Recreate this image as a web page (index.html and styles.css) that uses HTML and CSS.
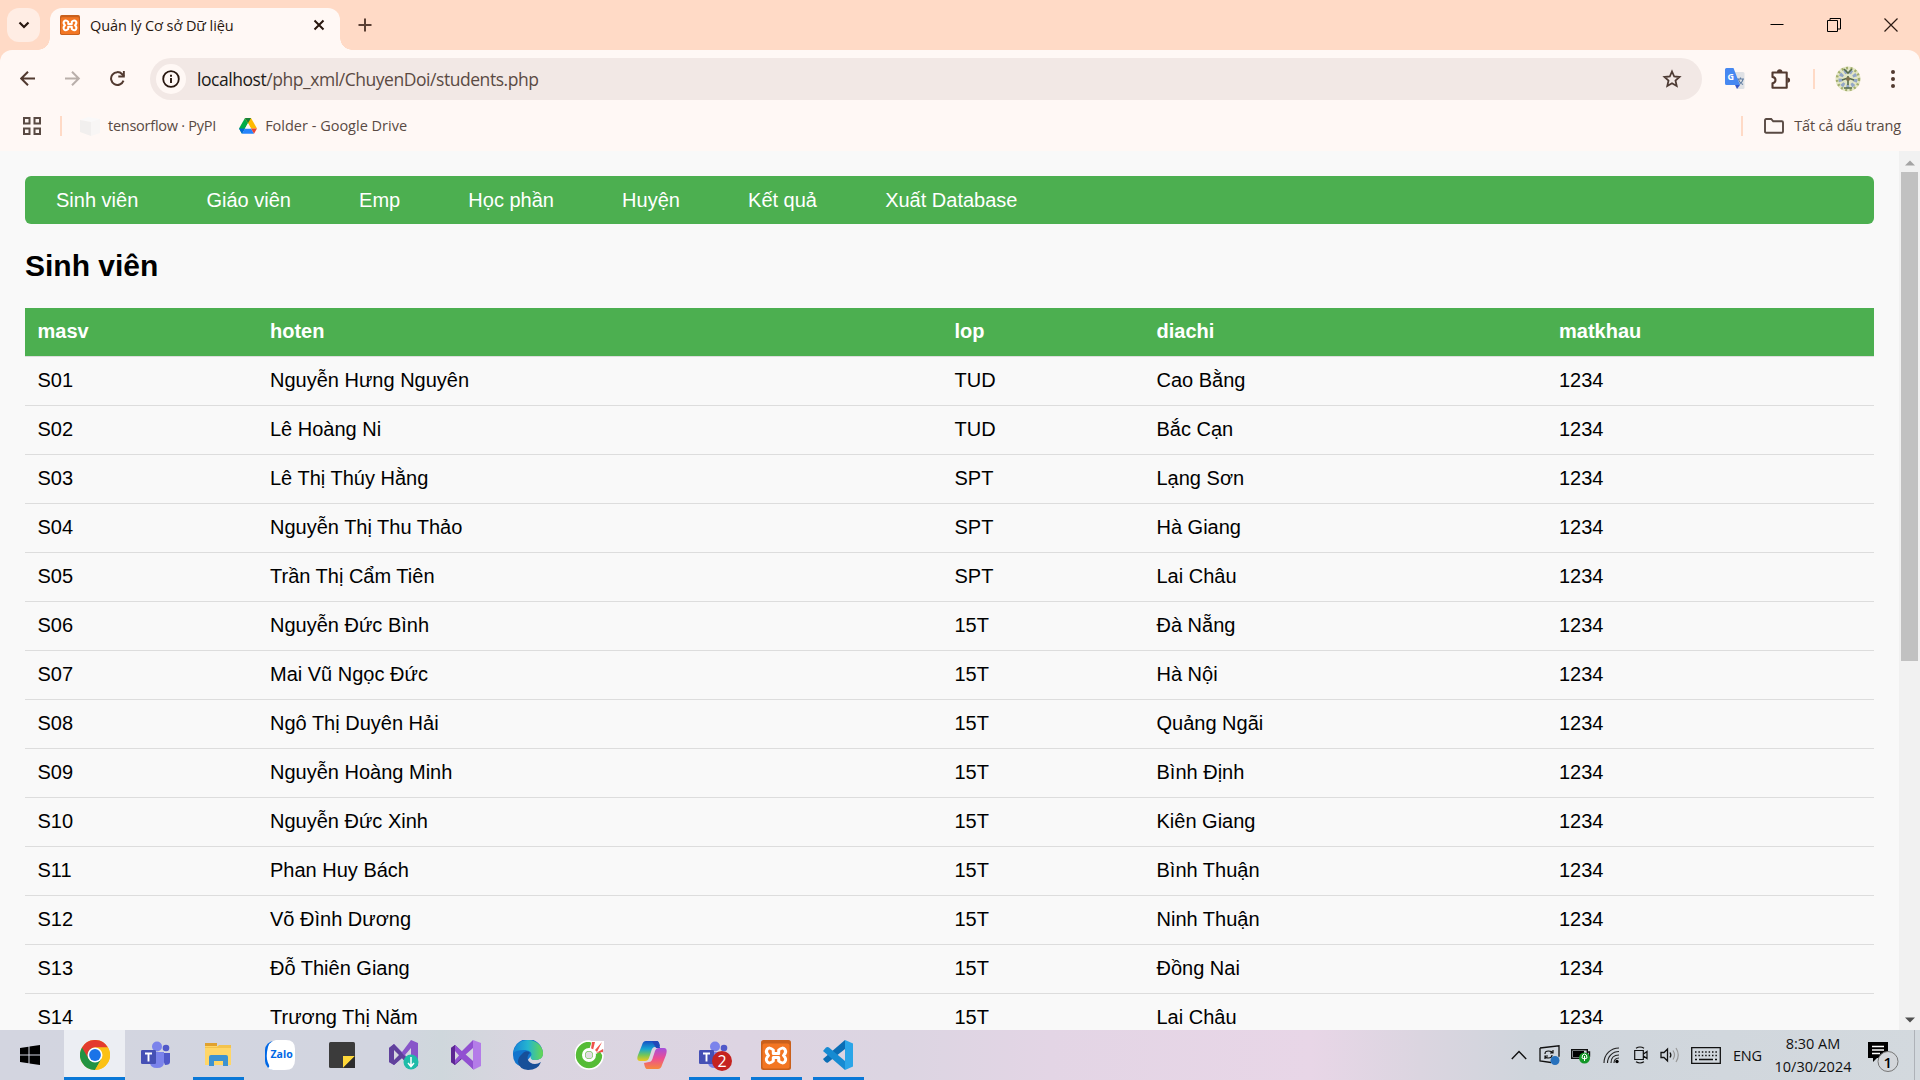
FILE: index.html
```html
<!DOCTYPE html>
<html lang="vi">
<head>
<meta charset="utf-8">
<title>Quản lý Cơ sở Dữ liệu</title>
<link rel="stylesheet" href="styles.css">
</head>
<body>
<div class="screen">
  <header class="tabstrip">
    <button class="tab-search" aria-label="Tab search"><svg width="12" height="8" viewBox="0 0 12 8"><path d="M1.5 1.5 6 6l4.500-4.500" fill="none" stroke="#28170f" stroke-width="2.200"/></svg></button>
    <div class="tab">
      <svg class="xampp" width="20" height="20" viewBox="0 0 30 30"><use href="#xampp"/></svg>
      <span class="tab-title">Quản lý Cơ sở Dữ liệu</span>
      <svg class="tab-close" width="12" height="12" viewBox="0 0 12 12"><path d="M1.500 1.500l9 9m0-9l-9 9" stroke="#28170f" stroke-width="2"/></svg>
    </div>
    <svg class="new-tab" width="14" height="14" viewBox="0 0 14 14"><path d="M7 .500v13M.500 7h13" stroke="#5a3f33" stroke-width="2"/></svg>
    <div class="window-buttons">
      <svg width="14" height="14" viewBox="0 0 14 14"><path d="M.500 6.500h13" stroke="#000" stroke-width="1"/></svg>
      <svg width="14" height="14" viewBox="0 0 14 14"><path d="M.500 2.500h10v11h-10zM3 2.500v-2h10.500v10.500h-3" fill="none" stroke="#000"/></svg>
      <svg width="14" height="14" viewBox="0 0 14 14"><path d="M.500.500l13 13m0-13l-13 13" stroke="#2b1a13" stroke-width="1.200"/></svg>
    </div>
  </header>

  <div class="toolbar">
    <svg class="nav-icon" width="16" height="16" viewBox="0 0 16 16"><path d="M15 7.500H1.500M8 .700 1.200 7.500l6.800 6.800" fill="none" stroke="#523a30" stroke-width="2"/></svg>
    <svg class="nav-icon" width="16" height="16" viewBox="0 0 16 16"><path d="M0 7.500H13.500M7 .700 13.800 7.500 7 14.300" fill="none" stroke="#b9afaa" stroke-width="2"/></svg>
    <svg class="nav-icon" width="16" height="16" viewBox="0 0 16 16"><path d="M13.500 9.700A6.400 6.400 0 1 1 12.200 3.200L14 5.200" fill="none" stroke="#523a30" stroke-width="2"/><path d="M14.800 0v6.500H8.300v-1.900h4.600V0z" fill="#523a30"/></svg>
    <div class="omnibox">
      <span class="site-info"><svg width="18" height="18" viewBox="0 0 18 18"><circle cx="9" cy="9" r="7.800" fill="none" stroke="#28170f" stroke-width="1.800"/><path d="M9 8v5M9 4.800v1.900" stroke="#28170f" stroke-width="1.900"/></svg></span>
      <span class="url"><b>localhost</b>/php_xml/ChuyenDoi/students.php</span>
      <svg class="star" width="20" height="20" viewBox="0 0 20 20"><path d="M10 2.500l2.200 5 5.300.500-4 3.600 1.200 5.400L10 14.200 5.300 17l1.200-5.400-4-3.600 5.300-.500z" fill="none" stroke="#4e3b34" stroke-width="1.800"/></svg>
    </div>
    <div class="extensions">
      <svg width="20" height="22" viewBox="0 0 20 22"><path d="M8 4h10a1.500 1.500 0 0 1 1.500 1.500v14A1.500 1.500 0 0 1 18 21h-6z" fill="#dfe1e5"/><path d="M12 11h7m-3.500-1.500V11m-2 0c.500 3 2.500 4.500 4.500 5.500m0-5.500c-.500 3-3 5-5 6" stroke="#607da1" stroke-width="1.200" fill="none"/><path d="M10 17h5l-3 4z" fill="#3657c8"/><path d="M1.500 0h7L15 17H1.500A1.500 1.500 0 0 1 0 15.500v-14A1.500 1.500 0 0 1 1.500 0z" fill="#4688f1"/><text x="2.500" y="11.800" class="g-letter">G</text></svg>
      <svg class="puzzle" width="22" height="21" viewBox="0 0 22 21"><path d="M2.500 3.500h14.200v15.300H2.500v-4.500q3-.600 3-3.200t-3-3.200z" fill="none" stroke="#523a30" stroke-width="2.100" stroke-linejoin="round"/><path d="M7 3a2.700 2.700 0 0 1 5.400 0M17.500 8.500a2.500 2.500 0 0 1 0 5.200z" fill="#523a30"/></svg>
      <i class="divider"></i>
      <svg class="avatar" width="26" height="26" viewBox="0 0 26 26"><circle cx="13" cy="13" r="12.500" fill="#e3e6c4"/><circle cx="13" cy="13" r="11" fill="none" stroke="#a3ae6c" stroke-width="2.500" stroke-dasharray="2 2.500"/><circle cx="13" cy="13" r="7.500" fill="none" stroke="#93a7c6" stroke-width="4" stroke-dasharray="3 2.200"/><path d="M9 3l4 4 4-4M13 10v9M9 22h8M7 14l6-2 6 2" fill="none" stroke="#566b4a" stroke-width="1.600"/><circle cx="13" cy="13" r="2" fill="#80704b"/></svg>
      <svg width="4" height="18" viewBox="0 0 4 18" fill="#523a30"><circle cx="2" cy="2" r="2"/><circle cx="2" cy="9" r="2"/><circle cx="2" cy="16" r="2"/></svg>
    </div>
  </div>

  <div class="bookmarks">
    <svg width="18" height="18" viewBox="0 0 18 18"><path d="M1 1h5.500v5.500H1zM11.500 1H17v5.500h-5.500zM1 11.500h5.500V17H1zM11.500 11.500H17V17h-5.500z" fill="none" stroke="#594a43" stroke-width="2"/></svg>
    <i class="divider"></i>
    <svg class="pypi" width="20" height="20" viewBox="0 0 20 20"><path d="M0 4 8 1l12 2-8 3z" fill="#faf9f9"/><path d="M0 4l11 2v14L0 16z" fill="#f1efee"/><path d="M11 6l9-3v14l-9 3z" fill="#f8f6f5"/></svg>
    <span class="mark-pypi">tensorflow · PyPI</span>
    <svg class="drive" width="18" height="18" viewBox="0 0 18 18"><path d="M6 1h6L9 6.500z" fill="#188038"/><path d="M6 1 0 11.500 3 16.800 9 6.300z" fill="#00ac47"/><path d="M12 1l6 10.500h-6L6 1z" fill="#ffba00"/><path d="M6 1h6L9 6.300z" fill="#188038"/><path d="M0 11.500h6L3 16.800z" fill="#0066da"/><path d="M6 11.500h6L15 16.800H3z" fill="#2684fc"/><path d="M12 11.500h6L15 16.800z" fill="#ea4335"/><path d="M9 6.300 6 11.500h6z" fill="#fff8f5"/></svg>
    <span class="mark-drive">Folder - Google Drive</span>
    <div class="all-marks">
      <i class="divider"></i>
      <svg width="20" height="16" viewBox="0 0 20 16"><path d="M1 13.500V2.200Q1 1 2.200 1h5l2 2.300h8.600Q19 3.300 19 4.500v9q0 1.300-1.200 1.300H2.200Q1 14.800 1 13.500z" fill="none" stroke="#594a43" stroke-width="1.900"/></svg>
      <span class="mark-all">Tất cả dấu trang</span>
    </div>
  </div>

  <div class="viewport">
    <main class="page">
      <nav class="menu">
        <a>Sinh viên</a><a>Giáo viên</a><a>Emp</a><a>Học phần</a><a>Huyện</a><a>Kết quả</a><a>Xuất Database</a>
      </nav>
      <h2>Sinh viên</h2>
      <table>
        <colgroup><col class="c-id"><col class="c-name"><col class="c-class"><col class="c-place"><col class="c-pass"></colgroup>
        <thead><tr><th>masv</th><th>hoten</th><th>lop</th><th>diachi</th><th>matkhau</th></tr></thead>
        <tbody>
          <tr><td>S01</td><td>Nguyễn Hưng Nguyên</td><td>TUD</td><td>Cao Bằng</td><td>1234</td></tr>
          <tr><td>S02</td><td>Lê Hoàng Ni</td><td>TUD</td><td>Bắc Cạn</td><td>1234</td></tr>
          <tr><td>S03</td><td>Lê Thị Thúy Hằng</td><td>SPT</td><td>Lạng Sơn</td><td>1234</td></tr>
          <tr><td>S04</td><td>Nguyễn Thị Thu Thảo</td><td>SPT</td><td>Hà Giang</td><td>1234</td></tr>
          <tr><td>S05</td><td>Trần Thị Cẩm Tiên</td><td>SPT</td><td>Lai Châu</td><td>1234</td></tr>
          <tr><td>S06</td><td>Nguyễn Đức Bình</td><td>15T</td><td>Đà Nẵng</td><td>1234</td></tr>
          <tr><td>S07</td><td>Mai Vũ Ngọc Đức</td><td>15T</td><td>Hà Nội</td><td>1234</td></tr>
          <tr><td>S08</td><td>Ngô Thị Duyên Hải</td><td>15T</td><td>Quảng Ngãi</td><td>1234</td></tr>
          <tr><td>S09</td><td>Nguyễn Hoàng Minh</td><td>15T</td><td>Bình Định</td><td>1234</td></tr>
          <tr><td>S10</td><td>Nguyễn Đức Xinh</td><td>15T</td><td>Kiên Giang</td><td>1234</td></tr>
          <tr><td>S11</td><td>Phan Huy Bách</td><td>15T</td><td>Bình Thuận</td><td>1234</td></tr>
          <tr><td>S12</td><td>Võ Đình Dương</td><td>15T</td><td>Ninh Thuận</td><td>1234</td></tr>
          <tr><td>S13</td><td>Đỗ Thiên Giang</td><td>15T</td><td>Đồng Nai</td><td>1234</td></tr>
          <tr><td>S14</td><td>Trương Thị Năm</td><td>15T</td><td>Lai Châu</td><td>1234</td></tr>
        </tbody>
      </table>
    </main>
    <div class="scrollbar">
      <svg width="10" height="6" viewBox="0 0 10 6"><path d="M0 5.500 5 .500l5 5z" fill="#a3a3a3"/></svg>
      <div class="thumb"></div>
      <svg class="down" width="10" height="6" viewBox="0 0 10 6"><path d="M0 .500h10l-5 5z" fill="#505050"/></svg>
    </div>
  </div>

  <footer class="taskbar">
    <div class="task start"><svg width="20" height="20" viewBox="0 0 20 20"><path d="M0 3l8.500-1.200v7.700H0zM9.500 1.600 20 0v9.500H9.500zM0 10.500h8.500v7.700L0 17zM9.500 10.500H20V20L9.500 18.400z"/></svg></div>
    <div class="task active"><svg width="30" height="30" viewBox="0 0 30 30"><circle cx="15" cy="15" r="15" fill="#fbc116"/><path d="M2 7.500A15 15 0 0 0 15 30l6.500-11.300L15 15 13 7.500z" fill="#229342"/><path d="M2 7.500A15 15 0 0 1 28 7.500H15a7.500 7.500 0 0 0-6.500 11.200z" fill="#e33b2e"/><path d="M28 7.500H15l6.500 11.200L15 30A15 15 0 0 0 28 7.500z" fill="#fbc116"/><circle cx="15" cy="15" r="7.500" fill="#fff"/><circle cx="15" cy="15" r="5.900" fill="#1a73e8"/></svg></div>
    <div class="task"><svg width="30" height="28" viewBox="0 0 30 28"><use href="#teams"/></svg></div>
    <div class="task open"><svg width="28" height="26" viewBox="0 0 28 26"><path d="M1 1h12v5H1z" fill="#e0a12f"/><path d="M1 4h26v19H1z" fill="#ffd667"/><path d="M1 5h12l2-2h12v3H1z" fill="#f4c34c"/><path d="M5 24V15q0-2 2-2h15q2 0 2 2v9h-5v-5h-9v5z" fill="#3d92d1"/></svg></div>
    <div class="task"><svg width="30" height="30" viewBox="0 0 30 30"><rect width="26" height="29" x="0" y="1" rx="9" fill="#0068e5"/><path d="M11 0h10q9 0 9 9v11q0 10-10 10H8q-3 0-5-2 2-1 1-3-3-5-2-13Q3 1 11 0z" fill="#fff"/><text x="5.500" y="17.500" class="zalo">Zalo</text></svg></div>
    <div class="task"><svg width="26" height="26" viewBox="0 0 26 26"><rect width="26" height="26" rx="1.500" fill="#3b3b3b"/><path d="M14 26V14h12z" fill="#ffd83a"/><path d="M26 14v12H14z" fill="#2d2d2d"/></svg></div>
    <div class="task"><svg width="30" height="30" viewBox="0 0 30 30"><path d="M0 8 5 4l8 8L22 0l7 3v23l-6 3L13 18l-8 7-5-3z" fill="#8855c9"/><path d="M0 8 5 4l17 19v6L13 18l-8 7-5-3z" fill="#60419c"/><path d="M5 10v10l5-5zM22 8l-6 7 6 6z" fill="#d5d7df"/><circle cx="22" cy="22" r="7.500" fill="#1ebca8"/><path d="M22 17v10m-3-4l3 3.500 3-3.500" stroke="#fff" stroke-width="1.500" fill="none"/></svg></div>
    <div class="task"><svg width="30" height="30" viewBox="0 0 30 30"><path d="M0 8 4 5l18 18V29L12 18 4 25l-4-3z" fill="#5c2693"/><path d="M0 22 22 0v8L4 24z" fill="#9150d1"/><path d="M4 5l18 16v8L4 13z" fill="#9150d1"/><path d="M0 8 4 5v20l-4-3z" fill="#5c2693"/><path d="M22 0l8 3v23l-8 4z" fill="#b47ce8"/><path d="M4 11v9l4-4.500z" fill="#d8d5df"/></svg></div>
    <div class="task"><svg width="30" height="30" viewBox="0 0 30 30"><defs><linearGradient id="edge-top"><stop stop-color="#1684d8"/><stop offset=".500" stop-color="#25b5cf"/><stop offset="1" stop-color="#67d84e"/></linearGradient></defs><path d="M0 15A15 15 0 0 1 30 13q0 7-8 7-5 0-4-4L9 27Q0 24 0 15z" fill="#1174cd"/><path d="M0 13C2 4 8 0 15 0c9 0 15 7 15 13 0 5-3 7-8 7-4 0-5-2-4-4 2-4-3-6-7-6-5 0-9 1-11 3z" fill="url(#edge-top)"/><path d="M9 14c3-4 7-3 8-1-5 4-2 11 5 11q3 0 6-2-3 8-13 8-9-1-10-8 0-5 4-8z" fill="#174f99"/></svg></div>
    <div class="task"><svg width="30" height="30" viewBox="0 0 30 30"><path d="M14 1A14 14 0 1 0 28 15L24 8 20 3z" fill="#55bc36" stroke="#fff" stroke-width="1.600"/><path d="M14 10 17 1h12v8l-8 5z" fill="#fff"/><path d="M16 9 17 2h3l-2 8zM20 10l7-8-5 10zM21 13l7-4v3z" fill="#ef534b"/><circle cx="14" cy="15" r="5.500" fill="#55bc36" stroke="#fff" stroke-width="3"/><circle cx="14" cy="15" r="3.500" fill="#e4dce4"/></svg></div>
    <div class="task"><svg width="30" height="28" viewBox="0 0 30 28"><defs><linearGradient id="cop-a" x2="0" y2="1"><stop stop-color="#174fc4"/><stop offset=".400" stop-color="#18a6d1"/><stop offset=".700" stop-color="#72c65a"/><stop offset="1" stop-color="#efc91d"/></linearGradient><linearGradient id="cop-b" x2="0" y2="1"><stop stop-color="#a450dd"/><stop offset=".500" stop-color="#ed4e91"/><stop offset="1" stop-color="#f6893c"/></linearGradient></defs><path d="M9 0h11q2 0 3 5l-5 1q-3 0-4 5l-2 6q-1 3-4 3H3q-4 0-2-6L5 4q1-4 4-4z" fill="url(#cop-a)"/><path d="M21 28H10q-2 0-3-6l5-1q3 0 4-5l2-6q1-3 4-3h5q4 0 2 7l-4 10q-1 4-4 4z" fill="url(#cop-b)"/><path d="M15 0h5q2 0 3 7h-4z" fill="#2347b8"/></svg></div>
    <div class="task open"><svg class="teams-badged" width="34" height="32" viewBox="0 0 34 32"><use href="#teams"/><circle cx="23" cy="20" r="10" fill="#c52320"/><text x="18.500" y="26" class="badge">2</text></svg></div>
    <div class="task open"><svg width="30" height="30" viewBox="0 0 30 30"><use href="#xampp"/></svg></div>
    <div class="task open"><svg width="30" height="30" viewBox="0 0 30 30"><path d="M22 0v9L5 22.500q-2 1-5-3.500z" fill="#0b6eb5"/><path d="M0 11 3 7.500q1.500-1 3 0L22 21v9z" fill="#168bd2"/><path d="M22 0l8 3.500v23L22 30z" fill="#2ba5e8"/></svg></div>

    <div class="tray">
      <svg class="t-up" width="16" height="10" viewBox="0 0 16 10"><path d="M.800 9 8 1.500 15.200 9" fill="none" stroke="#111" stroke-width="1.400"/></svg>
      <svg class="t-sync" width="22" height="20" viewBox="0 0 22 20"><path d="M1 3 20 .800v11M1 3v13l11 1.500" fill="none" stroke="#111" stroke-width="1.300"/><path d="M6 9q0-3 3.500-3t4 2M14 5v3h-3M13 10q0 3-3.500 3T6 11M6 14v-3h3" fill="none" stroke="#111" stroke-width="1.200"/><circle cx="16" cy="15.500" r="4.500" fill="#2671bd"/></svg>
      <svg class="t-battery" width="20" height="17" viewBox="0 0 20 17"><path d="M.700 2.700h15.600v8.600H.700zM17 5h1.500v4H17" fill="none" stroke="#111" stroke-width="1.400"/><path d="M2 4h11v6H2z"/><circle cx="13.500" cy="11" r="5.500" fill="#149728"/><path d="M13.500 14v-5m-2.500 2q0-4 2.500-4t2.500 4q-2.500 2-5 0z" stroke="#fff" fill="none"/></svg>
      <svg class="t-wifi" width="17" height="17" viewBox="0 0 17 17"><circle cx="14" cy="14.500" r="1.700"/><path d="M1 16C1 7 8 1 16 1M4.500 16C4.500 9.500 9.500 4.500 16 4.500M8 16q0-8 8-8M11 16q0-4.800 5-5" fill="none" stroke="#222" stroke-width="1.100"/></svg>
      <svg class="t-cam" width="14" height="18" viewBox="0 0 14 18"><path d="M.700 4.500h8.600v9H.700zM9.500 8 13 5.500v7L9.500 10M2 2.200q4-2.400 8 0M2 15.800q4 2.400 8 0" fill="none" stroke="#111" stroke-width="1.200"/></svg>
      <svg class="t-sound" width="20" height="16" viewBox="0 0 20 16"><path d="M1 5.500h3L7.500 2v12L4 10.500H1zM10 5.500q1.700 2.500 0 5" fill="none" stroke="#111" stroke-width="1.300"/><path d="M13 3.500q3 4.500 0 9M16 1q4.500 7 0 14" fill="none" stroke="#999" stroke-width="1.200"/></svg>
      <svg class="t-kb" width="30" height="17" viewBox="0 0 30 17"><path d="M.700.700h28.600v15.600H.700z" fill="none" stroke="#111" stroke-width="1.300"/><path d="M4 5h22M4 8.500h22" stroke="#111" stroke-width="1.500" stroke-dasharray="1.500 1.900"/><path d="M4 12.500h2M8 12.500h14M24 12.500h2" stroke="#111" stroke-width="1.300"/></svg>
      <span class="lang">ENG</span>
      <div class="clock"><span class="time">8:30 AM</span><span class="date">10/30/2024</span></div>
      <svg class="t-note" width="31" height="31" viewBox="0 0 31 31"><path d="M0 0h20v16H9l-4 4v-4H0z"/><path d="M4 4.500h12M4 8h12M4 11.500h8" stroke="#fff" stroke-width="1.300"/><circle cx="20" cy="19.500" r="10" fill="#d3d6da" stroke="#777" stroke-width="1"/><text x="15.500" y="26" class="note-count">1</text></svg>
      <i class="peek"></i>
    </div>
  </footer>
</div>

<svg class="symbols" width="0" height="0">
  <symbol id="xampp" viewBox="0 0 30 30"><rect width="30" height="30" rx="2.500" fill="#c9601c"/><rect x="1.500" y="3.500" width="27" height="25" rx="2" fill="#f37623"/><path d="M12.300 10Q8.500 6.500 6 9.500 4.200 12.500 7.500 15.500 4.200 18.500 6 21.500 8.500 24.500 12.300 21v-3.500h5.400V21q3.800 3.500 6.300.500 1.800-3-1.500-6 3.300-3 1.500-6-2.500-3-6.300.500v3.500h-5.400z" fill="none" stroke="#fff" stroke-width="3" stroke-linejoin="round"/></symbol>
  <symbol id="teams" viewBox="0 0 30 28" width="30" height="28"><circle cx="16" cy="5.500" r="5" fill="#7b83eb"/><circle cx="25" cy="7" r="3.300" fill="#5059c9"/><path d="M19 12h10v9q0 3-5 3z" fill="#5059c9"/><path d="M9 11h14v10q0 6-7 6t-7-6z" fill="#7b83eb"/><rect y="9" width="15" height="14" rx="1.300" fill="#4550b5"/><path d="M4 12.500h7M7.500 12.500v8" stroke="#fff" stroke-width="1.900"/></symbol>
</svg>
</body>
</html>
```
FILE: styles.css
```css
* { box-sizing: border-box; }
html, body { margin: 0; height: 100%; overflow: hidden; }
svg { display: block; flex: none; }
.symbols { position: absolute; }

.screen {
  width: 1920px;
  height: 1080px;
  display: flex;
  flex-direction: column;
  font-family: "Open Sans", "Noto Sans", sans-serif;
  background: #ffdac6;
}

/* Browser tabs */
.tabstrip { height: 50px; flex: none; display: flex; align-items: flex-start; }
.tab-search {
  width: 33px;
  height: 34px;
  margin: 8px 10px 0 7px;
  padding: 0;
  border: 0;
  border-radius: 12px;
  background: #ffede4;
  display: flex;
  align-items: center;
  justify-content: center;
}
.tab {
  position: relative;
  width: 290px;
  height: 42px;
  margin-top: 8px;
  padding: 0 15px 8px 10px;
  border-radius: 12px 12px 0 0;
  background: #fff8f5;
  display: flex;
  align-items: center;
}
.tab::before, .tab::after {
  content: "";
  position: absolute;
  bottom: 0;
  width: 12px;
  height: 12px;
}
.tab::before { left: -12px; background: radial-gradient(circle at 0 0, transparent 11.500px, #fff8f5 12px); }
.tab::after { right: -12px; background: radial-gradient(circle at 100% 0, transparent 11.500px, #fff8f5 12px); }
.tab-title { margin-left: 10px; font-size: 14.500px; letter-spacing: -.07px; color: #28170f; white-space: nowrap; }
.tab-close { margin-left: auto; }
.new-tab { margin: 18px 0 0 18px; }
.window-buttons { margin: 18px 22px 0 auto; display: flex; gap: 43px; }

/* Navigation bar */
.toolbar {
  height: 54px;
  flex: none;
  padding: 4px 25px 0 20px;
  border-radius: 12px 12px 0 0;
  background: #fff8f5;
  display: flex;
  align-items: center;
}
.nav-icon { margin-right: 29px; }
.omnibox {
  width: 1552px;
  height: 42px;
  margin-left: -5px;
  padding: 0 20px 0 6px;
  border-radius: 21px;
  background: #f2e8e5;
  display: flex;
  align-items: center;
}
.site-info {
  width: 30px;
  height: 30px;
  border-radius: 50%;
  background: #fff8f5;
  display: flex;
  align-items: center;
  justify-content: center;
}
.url { margin-left: 11px; font-size: 17.500px; letter-spacing: -.45px; color: #5a4a43; white-space: nowrap; }
.url b { font-weight: 400; color: #201a18; }
.star { margin-left: auto; }
.extensions { margin-left: auto; display: flex; align-items: center; }
.puzzle { margin: 0 21px 0 25px; }
.avatar { margin: 0 30px 0 20px; }
.divider { width: 2px; height: 20px; flex: none; background: #ffdac6; }
.g-letter { font: 700 9px "Open Sans", sans-serif; fill: #fff; }

/* Bookmarks */
.bookmarks {
  height: 47px;
  flex: none;
  padding: 0 19px 4px 23px;
  background: #fff8f5;
  display: flex;
  align-items: center;
  font-size: 14.500px;
  color: #594a43;
  white-space: nowrap;
}
.bookmarks > .divider { margin: 0 18px 0 19px; }
.pypi { margin-right: 8px; }
.mark-pypi { letter-spacing: -.25px; }
.drive { margin: 0 8px 0 23px; }
.all-marks { margin-left: auto; display: flex; align-items: center; }
.all-marks svg { margin: 0 10px 0 21px; }
.mark-all { letter-spacing: -.15px; }

/* Web page */
.viewport { flex: 1; min-height: 0; display: flex; overflow: hidden; background: #f9f9f9; }
.page { flex: 1; padding: 25px; font-family: "Liberation Sans", Arial, sans-serif; font-size: 20px; color: #000; }
.menu {
  height: 48px;
  padding-left: 31px;
  border-radius: 6px;
  background: #4caf50;
  color: #fff;
  display: flex;
  align-items: center;
  gap: 68.150px;
}
.page h2 { margin: 24px 0 25px; font-size: 30px; line-height: 35px; }
table { width: 1849px; table-layout: fixed; border-collapse: separate; border-spacing: 0; }
.c-id { width: 232.500px; }
.c-name { width: 684.500px; }
.c-class { width: 202px; }
.c-place { width: 402.500px; }
th, td { height: 49px; padding: 0 12.500px 2px; text-align: left; border-bottom: 1px solid #ddd; }
th { background: #4caf50; background-clip: padding-box; color: #fff; }

.scrollbar { width: 21px; flex: none; padding: 9px 2px 7px; background: #f1f1f1; display: flex; flex-direction: column; align-items: center; }
.thumb { width: 17px; height: 489px; margin-top: 6px; background: #c1c1c1; }
.down { margin-top: auto; }

/* Taskbar */
.taskbar {
  height: 50px;
  flex: none;
  display: flex;
  background: linear-gradient(90deg, #d3d5e0 0, #d2d5e0 390px, #cfd7dc 440px, #dad5e0 530px, #ddd4e2 740px, #dcd5e2 900px, #e3d5e5 1050px, #e8d6e7 1310px, #dbd5e0 1420px, #cfd5dc 1530px, #d3d9de 1920px);
}
.task { width: 62px; height: 50px; flex: none; display: flex; align-items: center; justify-content: center; }
.start { width: 60px; margin-right: 4px; }
.task.active { width: 61px; background: #eceef3; border-bottom: 3px solid #0a78d7; padding-top: 3px; }
.task.open { background: linear-gradient(#0a78d7, #0a78d7) center bottom / 51px 3px no-repeat; }
.teams-badged { margin: 4px 0 0 4px; }
.zalo { font: 700 10.500px "Open Sans", sans-serif; fill: #0068e5; }
.badge { font: 16px "Open Sans", sans-serif; fill: #fff; }
.tray { margin-left: auto; display: flex; align-items: center; color: #111; }
.t-sync { margin-left: 12px; }
.t-battery { margin-left: 10px; }
.t-wifi { margin-left: 12px; }
.t-cam { margin-left: 14px; }
.t-sound { margin-left: 12px; }
.t-kb { margin-left: 11px; }
.lang { width: 31px; margin-left: 12px; font-size: 14.500px; letter-spacing: -.2px; }
.clock { width: 76px; margin-left: 11px; display: flex; flex-direction: column; align-items: center; font-size: 14.500px; line-height: 23px; white-space: nowrap; }
.t-note { margin: 5px 0 0 17px; }
.note-count { font: 600 15px "Open Sans", sans-serif; }
.peek { width: 1px; height: 50px; margin: 0 5px 0 15px; background: #aeb2b8; }
```
